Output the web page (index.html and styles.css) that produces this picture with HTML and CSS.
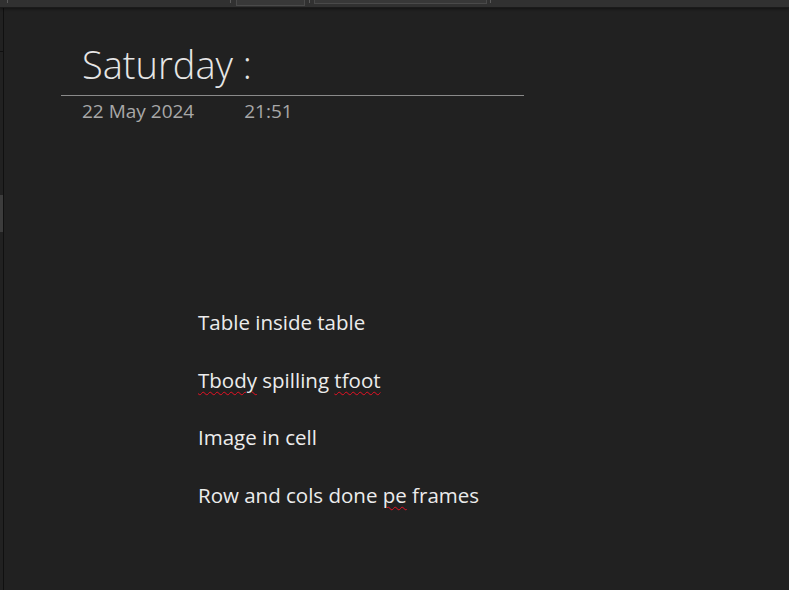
FILE: index.html
```html
<!DOCTYPE html>
<html lang="en">
<head>
<meta charset="utf-8">
<title>Saturday :</title>
<link rel="stylesheet" href="styles.css">
</head>
<body>
<div class="app">
  <div class="topbar">
    <span class="tick tick-a"></span>
    <span class="tick tick-b"></span>
    <span class="tab tab-a"></span>
    <span class="tick tick-c"></span>
    <span class="tab tab-b"></span>
    <span class="tick tick-d"></span>
  </div>
  <div class="main">
    <div class="gutter"><span class="gutter-mark"></span></div>
    <div class="scroll-thumb"></div>
    <div class="page">
      <header class="note-head">
        <h1 class="note-title">Saturday :</h1>
        <div class="note-meta">
          <span class="meta-date">22 May 2024</span>
          <span class="meta-time">21:51</span>
        </div>
      </header>
      <div class="outline">
        <p class="line">Table inside table</p>
        <p class="line"><span class="misspelt">Tbody</span> spilling <span class="misspelt">tfoot</span></p>
        <p class="line">Image in cell</p>
        <p class="line">Row and cols done <span class="misspelt">pe</span> frames</p>
      </div>
    </div>
  </div>
</div>
</body>
</html>
```

FILE: styles.css
```css
html, body {
  margin: 0;
  padding: 0;
  background: #212121;
}

body {
  font-family: "Open Sans", "Noto Sans", "Liberation Sans", sans-serif;
  color: #e8e8e8;
  width: 789px;
  height: 590px;
  overflow: hidden;
}

.app {
  position: relative;
  height: 590px;
  display: flex;
  flex-direction: column;
}

.topbar {
  height: 7px;
  flex: none;
  background: #313131;
  border-bottom: 1px solid #1b1b1b;
  box-shadow: 0 1px 3px rgba(0, 0, 0, 0.45);
  display: flex;
  align-items: flex-start;
  position: relative;
  z-index: 1;
}

.tick {
  width: 1px;
  height: 3px;
  background: #5a5a5a;
  flex: none;
}

.tick-a { margin-left: 7px; }
.tick-b { margin-left: 222px; }
.tick-c { margin-left: 4px; }
.tick-d { margin-left: 3px; }

.tab {
  flex: none;
  box-sizing: border-box;
  background: #383838;
  border: 1px solid #4a4a4a;
  border-top: none;
}

.tab-a {
  margin-left: 5px;
  width: 69px;
  height: 6px;
}

.tab-b {
  margin-left: 4px;
  width: 173px;
  height: 4px;
}

.main {
  flex: 1;
  display: flex;
  position: relative;
}

.gutter {
  width: 3px;
  flex: none;
  border-right: 1px solid #101010;
  display: flex;
  flex-direction: column;
}

.gutter-mark {
  margin-top: 43px;
  height: 1px;
  background: #101010;
}

.scroll-thumb {
  position: absolute;
  left: 0;
  top: 187px;
  width: 3px;
  height: 37px;
  background: #3c3c3c;
}

.page {
  flex: 1;
  display: flex;
  flex-direction: column;
}

.note-head {
  margin-left: 57px;
  width: 463px;
  margin-top: 34px;
}

.note-title {
  margin: 0;
  padding: 0 0 9px 21px;
  font-size: 38px;
  font-weight: 300;
  line-height: 44px;
  color: #e6e6e6;
  border-bottom: 1px solid #8a8a8a;
}

.note-meta {
  display: flex;
  gap: 50px;
  padding-left: 21px;
  margin-top: 4px;
  font-size: 19px;
  line-height: 23px;
  color: #a8a8a8;
}

.outline {
  margin-left: 194px;
  margin-top: 185px;
  display: flex;
  flex-direction: column;
  gap: 29.7px;
}

.line {
  margin: 0;
  font-size: 20.5px;
  line-height: 28px;
  color: #ececec;
}

.misspelt {
  text-decoration: underline wavy #e81123;
  text-decoration-thickness: 1px;
  text-underline-offset: 3px;
}
```
